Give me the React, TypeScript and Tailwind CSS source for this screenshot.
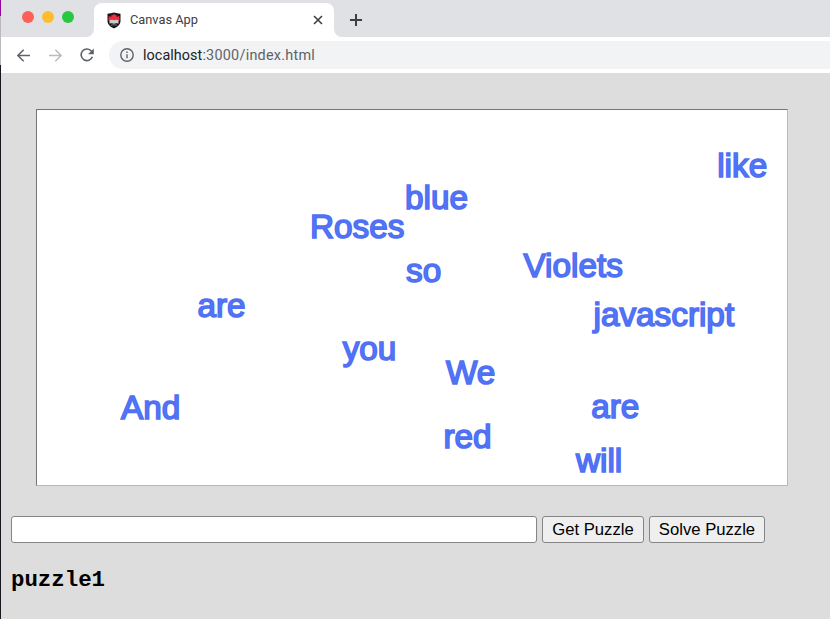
type Word = { text: string; x: number; y: number };

// x is the text origin and y the baseline, both relative to the board's inner corner.
const words: Word[] = [
  { text: "like", x: 680.2, y: 67 },
  { text: "blue", x: 368, y: 99.6 },
  { text: "Roses", x: 273, y: 128.6 },
  { text: "so", x: 369, y: 172.2 },
  { text: "Violets", x: 486.5, y: 167 },
  { text: "are", x: 160.5, y: 207 },
  { text: "javascript", x: 556.5, y: 216 },
  { text: "you", x: 305.7, y: 250.5 },
  { text: "We", x: 409, y: 274 },
  { text: "And", x: 84, y: 309 },
  { text: "are", x: 554.2, y: 308.4 },
  { text: "red", x: 406.5, y: 338.2 },
  { text: "will", x: 539, y: 362.2 },
];

const ASCENT = 28.2;

function Favicon() {
  return (
    <svg width="14" height="17" viewBox="0 0 14 17" className="shrink-0">
      <path d="M.5 1.8Q4 1.6 7 .5 10 1.6 13.5 1.8V9c0 3.6-3.2 6-6.5 7.4C3.700 15 .5 12.600.5 9Z" fill="#151515" />
      <path d="m7 1.500 1.200 1.800 1.400-.5v2l2.900-.7-.4 2 .7.600-.8 2.500H2l-.8-2.500.7-.600-.4-2 2.900.7v-2l1.400.5Z" fill="#f02b3f" />
      <path d="M2.500 8.200Q5 7.200 7 8.200q2-1 4.500 0v3.300q-2.500-.8-4.500.2-2-1-4.500-.2Z" fill="#c9cccb" />
      <path d="M4 13.200q3-1 6 0" stroke="#8e8e8e" strokeWidth=".8" fill="none" />
    </svg>
  );
}

function TabStrip() {
  return (
    <div className="flex h-[37px] items-end bg-[#dfe1e5]">
      <div className="flex w-[84px] items-center gap-2 self-start pt-[11px] pl-[21px]">
        <i className="size-3 rounded-full bg-[#ff5f57]" />
        <i className="size-3 rounded-full bg-[#febc2e]" />
        <i className="size-3 rounded-full bg-[#28c840]" />
      </div>
      <svg width="8" height="8" className="ml-[1px] shrink-0">
        <path d="M8 0v8H0a8 8 0 0 0 8-8Z" fill="#fff" />
      </svg>
      <div className="flex h-[34px] w-[240px] items-center rounded-t-lg bg-white pr-[11px] pl-[13px]">
        <Favicon />
        <span className="ml-[9px] flex-1 font-['Roboto'] text-[12.8px] leading-4 text-[#3c4043]">Canvas App</span>
        <svg width="10" height="10" viewBox="0 0 10 10" stroke="#3c4043" strokeWidth="1.6">
          <path d="m1 1 8 8M9 1 1 9" />
        </svg>
      </div>
      <svg width="8" height="8" className="shrink-0">
        <path d="M0 0v8h8a8 8 0 0 1-8-8Z" fill="#fff" />
      </svg>
      <svg width="12" height="12" viewBox="0 0 12 12" className="mb-[11px] ml-2" stroke="#3c4043" strokeWidth="2">
        <path d="M6 0v12M0 6h12" />
      </svg>
    </div>
  );
}

function Toolbar() {
  return (
    <div className="flex h-9 items-center bg-white">
      <svg width="13" height="13" viewBox="0 0 13 13" className="ml-[16px]" fill="none" stroke="#5f6368" strokeWidth="1.5">
        <path d="M13 6.500H1M6.700.7.900 6.500l5.800 5.800" />
      </svg>
      <svg width="13" height="13" viewBox="0 0 13 13" className="ml-[19px]" fill="none" stroke="#babcbe" strokeWidth="1.5">
        <path d="M0 6.500h12M6.300.7l5.800 5.800-5.800 5.800" />
      </svg>
      <svg width="14" height="14" viewBox="0 0 14 14" className="ml-[18px]" fill="none" stroke="#5f6368" strokeWidth="1.6">
        <path d="M12.400 8.700A5.800 5.800 0 1 1 11.500 3.200l1 1.200" />
        <path d="M13.800.5v5.700H8.100Z" fill="#5f6368" stroke="none" />
      </svg>
      <div className="ml-[15px] flex h-7 flex-1 items-center rounded-l-full bg-[#f1f3f4] pl-[11px]">
        <svg width="14" height="14" viewBox="0 0 14 14" fill="none" stroke="#5f6368" strokeWidth="1.4">
          <circle cx="7" cy="7" r="6.200" />
          <path d="M7 6.200v4M7 3.600v1.500" />
        </svg>
        <span className="ml-[9px] pt-[2px] font-['Roboto'] text-[14.4px] leading-5 tracking-[0.25px] text-[#5f6368]">
          <span className="tracking-[0.06px] text-[#202124]">localhost</span>:3000/index.html
        </span>
      </div>
    </div>
  );
}

function Board() {
  return (
    <div className="relative ml-[35px] h-[377px] w-[752px] border border-t-[#757575] border-r-[#b8b8b8] border-b-[#b8b8b8] border-l-[#757575] bg-white">
      {words.map((w, i) => (
        <span
          key={i}
          className="absolute font-['Liberation_Sans',sans-serif] text-[33.3px] leading-none whitespace-nowrap text-[#5279f2] [-webkit-text-stroke:1.6px_#4f6ff5]"
          style={{ left: w.x, top: w.y - ASCENT }}
        >
          {w.text}
        </span>
      ))}
    </div>
  );
}

const buttonClass =
  "h-[27px] rounded-[3px] border border-[#858585] bg-[#efefef] text-center font-['Liberation_Sans',sans-serif] text-[16.67px] leading-[25px] text-black";

export default function App() {
  return (
    <div className="flex h-[619px] w-[830px] overflow-hidden bg-[#dddddd]">
      <div className="flex w-px shrink-0 flex-col">
        <div className="h-4 bg-[#900b9b]" />
        <div className="h-[49px] bg-[#bdb7bf]" />
        <div className="flex-1 bg-[#17171f]" />
      </div>
      <div className="min-w-0 flex-1">
        <TabStrip />
        <Toolbar />
        <main className="pt-9">
          <Board />
          <div className="mt-[30px] ml-[10px] flex">
            <input aria-label="Puzzle" className="h-[27px] w-[526px] rounded-[3px] border border-[#858585] bg-white px-1 outline-none" />
            <button className={buttonClass + " ml-[5px] w-[102px]"}>Get Puzzle</button>
            <button className={buttonClass + " ml-[5px] w-[116px]"}>Solve Puzzle</button>
          </div>
          <p className="mt-[23px] ml-[10px] font-['Liberation_Mono',monospace] text-[22.4px] leading-7 font-bold text-black">puzzle1</p>
        </main>
      </div>
    </div>
  );
}
